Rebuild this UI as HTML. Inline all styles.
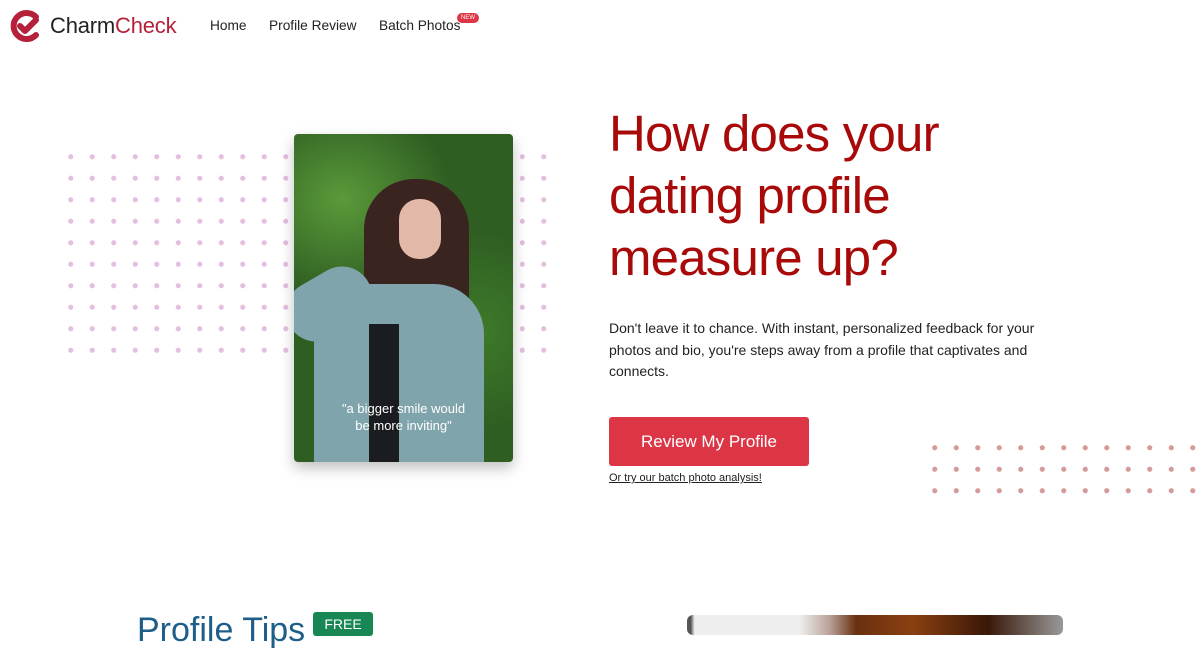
<!DOCTYPE html>
<html><head><meta charset="utf-8"><style>
*{margin:0;padding:0;box-sizing:border-box}
body{width:1200px;height:626px;overflow:hidden;background:#fff;font-family:"Liberation Sans",sans-serif;position:relative}
.abs{position:absolute}
.nav a{position:absolute;top:18px;font-size:13.7px;color:#222;text-decoration:none}
.dots{position:absolute;background-image:radial-gradient(circle,var(--c) 2.3px,transparent 2.8px);background-size:21.5px 21.5px}
h1{position:absolute;left:609px;top:103px;font-weight:400;font-size:51px;letter-spacing:-0.8px;line-height:62px;color:#a80a0a}
p.t{position:absolute;left:609px;top:318px;width:450px;font-size:14px;line-height:21.5px;color:#222}
.btn{position:absolute;left:609px;top:417px;width:200px;height:49px;background:#dc3545;border-radius:3px;color:#fff;font-size:17px;text-align:center;line-height:49px}
</style></head><body>
<svg class="abs" style="left:9px;top:9px" width="34" height="34" viewBox="0 0 34 34">
<path d="M27 8 A13 13 0 1 0 27 26" fill="none" stroke="#b5213a" stroke-width="6" stroke-linecap="round"/>
<path d="M11 17 L16 22 L27 11" fill="none" stroke="#b5213a" stroke-width="6" stroke-linecap="round" stroke-linejoin="round"/>
</svg>
<div class="abs" style="left:50px;top:13px;font-size:22px;letter-spacing:-0.2px;color:#222">Charm<span style="color:#b5213a">Check</span></div>
<div class="nav"><a style="left:210px">Home</a><a style="left:269px">Profile Review</a><a style="left:379px">Batch Photos</a></div>
<div class="abs" style="left:457px;top:13px;width:22px;height:10px;background:#dc3545;border-radius:5px;color:#fff;font-size:6px;line-height:10px;text-align:center">NEW</div>
<div class="dots" style="--c:#e4c0e0;left:60px;top:146px;width:494px;height:215px"></div>
<div class="dots" style="--c:#d69a9a;left:924px;top:437px;width:280px;height:65px"></div>
<div class="abs" style="left:294px;top:134px;width:219px;height:328px;border-radius:4px;overflow:hidden;box-shadow:0 6px 14px rgba(0,0,0,.25);background:radial-gradient(ellipse 50% 30% at 22% 20%,#5a9a3a,transparent),radial-gradient(ellipse 40% 30% at 85% 60%,#3e7a2a,transparent),#2f5e22">
<div class="abs" style="left:70px;top:45px;width:105px;height:170px;border-radius:50px 50px 30px 30px;background:#3a2420"></div>
<div class="abs" style="left:105px;top:65px;width:42px;height:60px;border-radius:20px;background:#e2b9a8"></div>
<div class="abs" style="left:-10px;top:140px;width:90px;height:60px;border-radius:30px;background:#7fa4ac;transform:rotate(-30deg)"></div>
<div class="abs" style="left:20px;top:150px;width:170px;height:190px;border-radius:50px 50px 0 0;background:#7fa4ac"></div>
<div class="abs" style="left:75px;top:190px;width:30px;height:150px;background:#1a1c20"></div>
<div class="abs" style="left:0;top:266px;width:219px;text-align:center;color:#fff;font-size:13px;line-height:17px">"a bigger smile would<br>be more inviting"</div>
</div>
<h1>How does your<br>dating profile<br>measure up?</h1>
<p class="t">Don't leave it to chance. With instant, personalized feedback for your photos and bio, you're steps away from a profile that captivates and connects.</p>
<div class="btn">Review My Profile</div>
<div class="abs" style="left:609px;top:472px;font-size:11px;color:#222;text-decoration:underline">Or try our batch photo analysis!</div>
<div class="abs" style="left:137px;top:611px;font-size:34px;color:#1e5f8a">Profile Tips</div>
<div class="abs" style="left:313px;top:612px;width:60px;height:24px;background:#198754;border-radius:3px;color:#fff;font-size:14px;text-align:center;line-height:24px">FREE</div>
<div class="abs" style="left:687px;top:615px;width:376px;height:20px;border-radius:6px;background:linear-gradient(90deg,#555 0 1%,#eee 2% 30%,#b8a098 38%,#6a3010 45%,#8a4010 60%,#3a1808 80%,#999 100%)"></div>
</body></html>
